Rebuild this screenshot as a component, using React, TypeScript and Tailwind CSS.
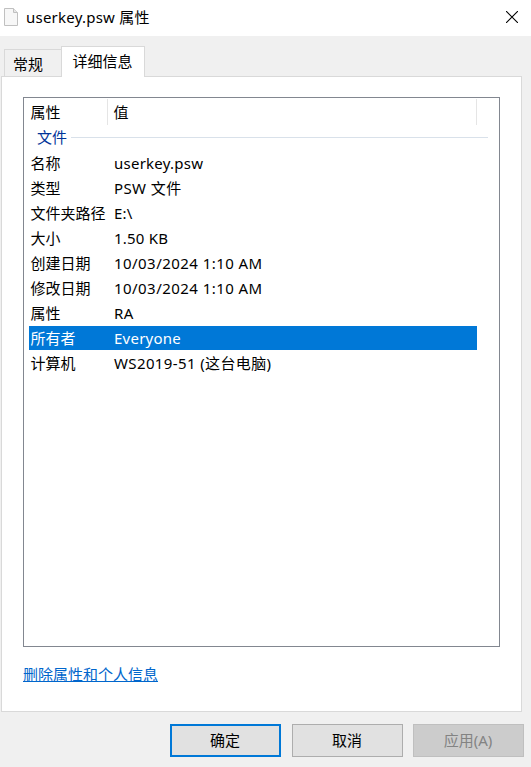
import React from "react";

const rows = [
  { name: "名称", value: "userkey.psw", tracking: "tracking-[0.25px]" },
  { name: "类型", value: "PSW 文件", tracking: "tracking-[0.4px]" },
  { name: "文件夹路径", value: "E:\\", tracking: "tracking-[0.2px]" },
  { name: "大小", value: "1.50 KB", tracking: "tracking-[0.2px]" },
  { name: "创建日期", value: "10/03/2024 1:10 AM", tracking: "tracking-[0.45px]" },
  { name: "修改日期", value: "10/03/2024 1:10 AM", tracking: "tracking-[0.45px]" },
  { name: "属性", value: "RA", tracking: "tracking-[0.5px]" },
  { name: "所有者", value: "Everyone", tracking: "tracking-[0.25px]", selected: true },
  { name: "计算机", value: "WS2019-51 (这台电脑)", tracking: "tracking-[0.38px]" },
];

function FileIcon() {
  return (
    <svg className="ml-1 mt-2 h-[18px] w-[14px] shrink-0" viewBox="0 0 14 18" fill="none">
      <path d="M.5.5h9l4 4v13H.5z" fill="#f7f7f7" stroke="#c0c0c0" />
      <path d="M9.5.5v4h4" fill="#e6e6e6" stroke="#c0c0c0" />
    </svg>
  );
}

function TitleBar() {
  return (
    <header className="flex h-9 shrink-0 bg-white">
      <FileIcon />
      <h1 className="ml-2 text-[15px] leading-[34px] tracking-[0.23px]">userkey.psw 属性</h1>
      <button className="ml-auto mr-[13px] mt-[11px] h-3 w-3" aria-label="关闭">
        <svg viewBox="0 0 12 12" className="h-3 w-3" stroke="#000" strokeWidth="1.1">
          <path d="M0 0l12 12M12 0L0 12" />
        </svg>
      </button>
    </header>
  );
}

function Tabs() {
  return (
    <nav className="z-10 -mb-px ml-1 mt-[10px] flex h-[31px] shrink-0 items-end">
      <button className="mb-px h-[27px] w-[57px] border-l border-t border-[#d9d9d9] bg-[#f0f0f0] pl-2 text-left leading-[28px]">
        常规
      </button>
      <button className="flex h-[31px] w-[84px] items-start border border-b-0 border-[#d9d9d9] bg-white pl-[10.5px] text-left leading-[28px]">
        详细信息
      </button>
    </nav>
  );
}

function PropertyList() {
  return (
    <section className="h-[550px] w-[477px] border border-[#828790] pl-[5px] pt-px">
      <div className="flex h-[26px] w-[448px] border-r border-[#e5e5e5] leading-[26px]">
        <span className="w-[79px] border-r border-[#e5e5e5] pl-[1.5px]">属性</span>
        <span className="pl-[5.5px]">值</span>
      </div>
      <div className="flex h-[26px] w-[459px] items-start pl-2 text-[#003399]">
        <span className="leading-[24px]">文件</span>
        <span className="ml-1 mt-3 h-px flex-1 bg-[#d9e1ea]" />
      </div>
      {rows.map((row, i) => (
        <div
          key={i}
          className={
            "mb-px flex h-6 w-[448px] leading-[25px] " +
            (row.selected ? "bg-[#0078d7] text-white" : "")
          }
        >
          <span className="w-[85px] shrink-0 pl-[1.5px]">{row.name}</span>
          <span className={"whitespace-nowrap " + row.tracking}>{row.value}</span>
        </div>
      ))}
    </section>
  );
}

export default function App() {
  return (
    <main className="flex h-[767px] w-[531px] flex-col overflow-hidden bg-[#f0f0f0] font-['Noto_Sans','Noto_Sans_CJK_SC',sans-serif] text-[15px] text-black">
      <TitleBar />
      <Tabs />
      <div className="ml-px flex h-[636px] w-[521px] shrink-0 flex-col items-start border border-[#d9d9d9] bg-white pl-[21px] pt-5">
        <PropertyList />
        <a className="mt-[14px] text-[#0066cc] underline leading-[26px]">删除属性和个人信息</a>
      </div>
      <footer className="mr-[7px] mt-3 flex justify-end">
        <button className="h-[33px] w-[111px] border-2 border-[#0078d7] bg-[#e1e1e1] pr-px">
          <span className="-mt-px block leading-[28px]">确定</span>
        </button>
        <button className="ml-[11px] h-[33px] w-[111px] border border-[#adadad] bg-[#e1e1e1] pr-px">
          <span className="-mt-px block leading-[30px]">取消</span>
        </button>
        <button className="ml-[10px] h-[33px] w-[111px] border border-[#bfbfbf] bg-[#cccccc] pr-px text-[#838383]">
          <span className="-mt-px block leading-[30px]">应用(A)</span>
        </button>
      </footer>
    </main>
  );
}
